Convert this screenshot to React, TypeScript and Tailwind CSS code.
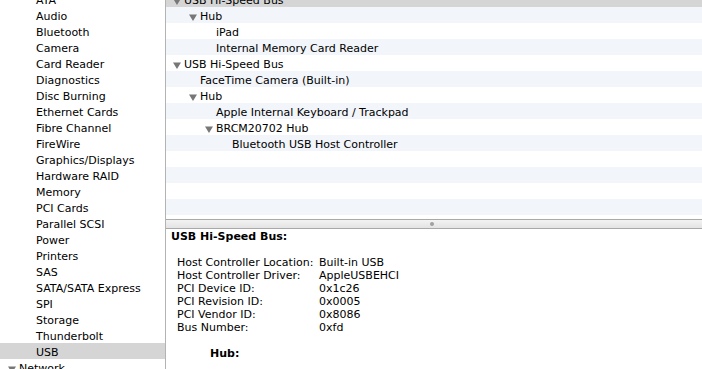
import React from "react";

const sidebar = [
  "ATA","Audio","Bluetooth","Camera","Card Reader","Diagnostics","Disc Burning","Ethernet Cards","Fibre Channel","FireWire","Graphics/Displays","Hardware RAID","Memory","PCI Cards","Parallel SCSI","Power","Printers","SAS","SATA/SATA Express","SPI","Storage","Thunderbolt","USB",
];

type Row = { text: string; level: number; tri: boolean };
const tree: Row[] = [
  { text: "USB Hi-Speed Bus", level: 0, tri: true },
  { text: "Hub", level: 1, tri: true },
  { text: "iPad", level: 2, tri: false },
  { text: "Internal Memory Card Reader", level: 2, tri: false },
  { text: "USB Hi-Speed Bus", level: 0, tri: true },
  { text: "FaceTime Camera (Built-in)", level: 1, tri: false },
  { text: "Hub", level: 1, tri: true },
  { text: "Apple Internal Keyboard / Trackpad", level: 2, tri: false },
  { text: "BRCM20702 Hub", level: 2, tri: true },
  { text: "Bluetooth USB Host Controller", level: 3, tri: false },
  { text: "", level: 0, tri: false },
  { text: "", level: 0, tri: false },
  { text: "", level: 0, tri: false },
  { text: "", level: 0, tri: false },
  { text: "", level: 0, tri: false },
];

const details: [string, string][] = [
  ["Host Controller Location:", "Built-in USB"],
  ["Host Controller Driver:", "AppleUSBEHCI"],
  ["PCI Device ID:", "0x1c26"],
  ["PCI Revision ID:", "0x0005"],
  ["PCI Vendor ID:", "0x8086"],
  ["Bus Number:", "0xfd"],
];

function Tri() {
  return (
    <svg width="8" height="7" viewBox="0 0 8 7" className="shrink-0">
      <path d="M0 0.5 L8 0.5 L4 7 Z" fill="#777777" />
    </svg>
  );
}

export default function App() {
  return (
    <div
      className="flex w-[702px] h-[369px] overflow-hidden bg-white text-black text-[11px] leading-[14px]"
      style={{ fontFamily: '"DejaVu Sans", sans-serif' }}
    >
      <div className="w-[165px] shrink-0 flex flex-col -mt-[9px]">
        {sidebar.map((s) => (
          <div
            key={s}
            className={`h-[16px] shrink-0 pl-[36px] pt-[3px] ${s === "USB" ? "bg-[#d5d5d5]" : ""}`}
          >
            {s}
          </div>
        ))}
        <div className="h-[16px] shrink-0 pl-[8px] pt-[3px] flex items-start gap-[3px]">
          <span className="flex pt-[4px]">
            <Tri />
          </span>
          <span>Network</span>
        </div>
      </div>
      <div className="w-px shrink-0 bg-[#b3b3b3]" />
      <div className="flex-1 flex flex-col min-w-0">
        <div className="h-[219px] shrink-0 overflow-hidden">
          <div className="flex flex-col -mt-[9px]">
            {tree.map((r, i) => (
              <div
                key={i}
                className={`h-[16px] shrink-0 pt-[3px] flex items-start ${
                  i === 0 ? "bg-[#d5d5d5]" : i % 2 === 1 ? "bg-[#f2f5fa]" : "bg-white"
                }`}
                style={{ paddingLeft: 18 + r.level * 16 - (r.tri ? 11 : 0) }}
              >
                {r.tri && (
                  <span className="mr-[3px] flex pt-[4px]">
                    <Tri />
                  </span>
                )}
                <span>{r.text}</span>
              </div>
            ))}
          </div>
        </div>
        <div className="h-[10px] shrink-0 border-y border-[#a9a9a9] bg-gradient-to-b from-[#f3f3f3] to-[#e3e3e3] flex items-center justify-center">
          <div className="w-[4px] h-[4px] rounded-full bg-[#a0a0a0] ml-[-4px]" />
        </div>
        <div className="flex-1 pl-[5px] pt-[1px] leading-[13px]">
          <div className="font-bold">USB Hi-Speed Bus:</div>
          <div className="mt-[13px] pl-[6px] flex flex-col">
            {details.map(([k, v]) => (
              <div key={k} className="flex h-[13px]">
                <span className="w-[142px] shrink-0">{k}</span>
                <span>{v}</span>
              </div>
            ))}
          </div>
          <div className="mt-[13px] pl-[39px] font-bold">Hub:</div>
        </div>
      </div>
    </div>
  );
}
